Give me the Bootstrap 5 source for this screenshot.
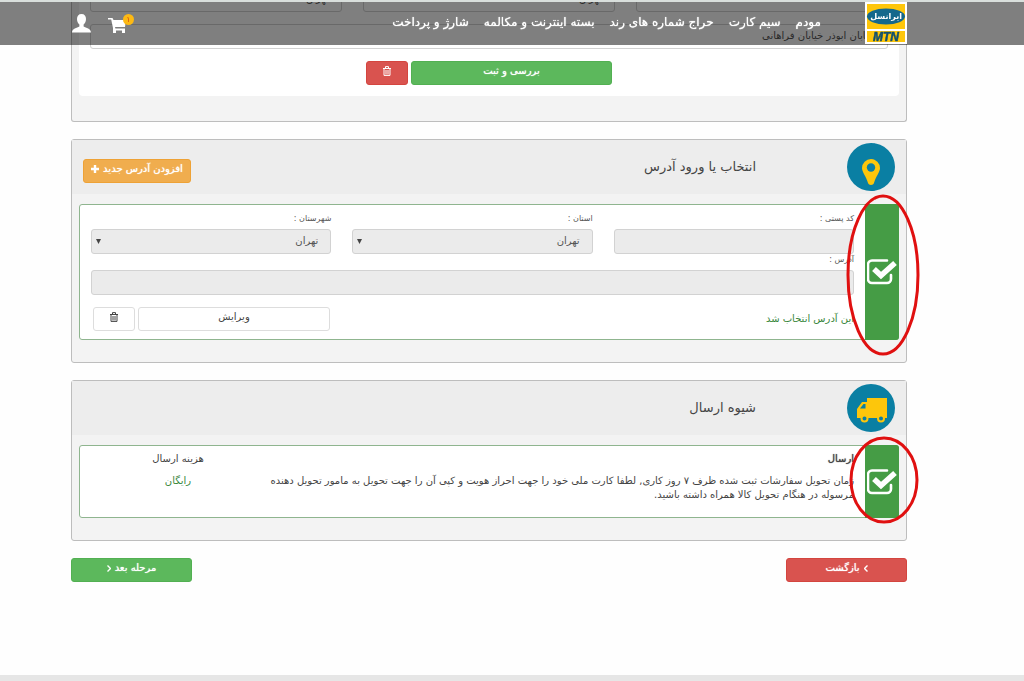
<!DOCTYPE html>
<html lang="fa" dir="rtl">
<head>
<meta charset="utf-8">
<meta name="viewport" content="width=device-width, initial-scale=1">
<title>ایرانسل</title>
<link href="https://cdn.jsdelivr.net/npm/bootstrap@5.3.0/dist/css/bootstrap.min.css" rel="stylesheet">
<style>
  body { font-family: "DejaVu Sans", sans-serif; font-size: 10px; line-height: 14px; color: #444; background: #fefefe; overflow-x: hidden; }
  .shell { padding-left: 71px; padding-right: 117px; }
  .topbar { height: 45px; background: rgba(0,0,0,.5); border-top: 2px solid #d9dfdc; z-index: 10; }
  .topbar a { color: #fff; text-decoration: none; font-size: 12px; text-shadow: 0 0 1px #fff; line-height: 18px; white-space: nowrap; }
  .menu { gap: 15px; margin-right: 44px; padding-top: 11px; }
  .logo { width: 42px; height: 42px; background: #fff; }
  .topbar .logo { text-shadow: none; }
  .cart-count { top: 0; left: 15px; width: 11px; height: 11px; border-radius: 50%; background: #fdb913; color: #d04a10; font-size: 8px; line-height: 11px; text-align: center; text-shadow: none; }
  .tools { gap: 17px; padding-left: 1px; padding-top: 12px; }
  .panel { background: #f3f3f3; border: 1px solid #bdbdbd; border-radius: 3px; margin-bottom: 17px; padding: 0 7px 22px; }
  .panel-first { border-top: 0; margin-top: -13px; padding-bottom: 25px; }
  .panel-top { background: #ededed; height: 54px; margin: 0 -7px 10px; padding: 0 11px; }
  .panel-top h2 { font-size: 13px; line-height: 18px; margin: 0 91px 0 0; font-weight: normal; color: #444; }
  .sheet { background: #fff; border-radius: 4px; padding: 0 11px 11px; }
  .chosen { background: #fff; border: 1px solid #8fb58f; border-radius: 3px; position: relative; }
  .chosen-body { padding: 8px 11px 8px; }
  .ship-body { padding: 6px 11px 15px; }
  .tick { width: 34px; flex: none; background: #459c45; margin: -1px -1px -1px 0; border-radius: 0 3px 3px 0; }
  .ring { position: absolute; pointer-events: none; overflow: visible; }
  .ring-tall { width: 76px; height: 162px; right: -23px; top: -11px; }
  .ring-short { width: 70px; height: 88px; right: -21px; top: -10px; }
  .fields { display: grid; grid-template-columns: repeat(3, 1fr); column-gap: 21px; }
  .field, .field:disabled { display: block; width: 100%; height: 25px; font-size: 10px; line-height: 14px; padding: 3px 12px 5px; border: 1px solid #d2d2d2; border-radius: 3px; background-color: #ebebeb; color: #555; opacity: 1; }
  select.field, select.field:disabled { background-image: url("data:image/svg+xml,%3Csvg xmlns='http://www.w3.org/2000/svg' viewBox='0 0 5 5'%3E%3Cpath d='M0 0h5L2.5 5z' fill='%23444'/%3E%3C/svg%3E"); background-size: 5px 5px; background-position: left 4px center; background-repeat: no-repeat; appearance: none; }
  .sheet .field { background-color: #fff; }
  .cap { display: block; font-size: 8px; line-height: 12px; color: #555; }
  .btn { font-size: 10px; line-height: 14px; padding: 2px 6px 6px; height: 24px; border-radius: 3px; color: #fff; display: inline-flex; align-items: center; justify-content: center; gap: 4px; white-space: nowrap; }
  .btn-go { background: #5cb85c; border-color: #52b052; }
  .btn-no { background: #d9534f; border-color: #d4453f; }
  .btn-add { background: #f0ad4e; border-color: #eea236; width: 108px; }
  .btn-plain { background: #fff; border-color: #ddd; color: #444; }
  .btn-go, .btn-no, .btn-add { text-shadow: 0 0 1px #fff; }
  .pair { gap: 3px; }
  .pair-end { padding-left: 2px; }
  .wide { width: 201px; }
  .mid { width: 192px; }
  .narrow { width: 42px; }
  .step { width: 121px; }
  .green-text { color: #38863b; }
  .note { white-space: nowrap; }
  .note strong { font-weight: normal; text-shadow: 0 0 1px #444; }
  .fee { width: 174px; flex: none; text-align: center; }
  .baseline-bar { height: 6px; background: #e6e6e6; }
</style>
</head>
<body class="d-flex flex-column min-vh-100">
<header class="topbar shell position-fixed top-0 start-0 end-0">
  <div class="d-flex align-items-start">
    <a href="#" class="logo" aria-label="ایرانسل">
      <svg width="42" height="42" viewBox="0 0 42 42" direction="ltr">
        <path d="M2 2h38v25H2zM2 29h38v11H2z" fill="#fec60a"/>
        <ellipse cx="21" cy="14.500" rx="19" ry="8" fill="#14688c"/>
        <text x="21" y="17" text-anchor="middle" font-family="DejaVu Sans" font-weight="bold" font-size="8" fill="#fff">ایرانسل</text>
        <text x="21" y="39" text-anchor="middle" font-family="Liberation Sans" font-weight="bold" font-style="italic" font-size="12" fill="#12506e" stroke="#12506e" stroke-width=".5">MTN</text>
      </svg>
    </a>
    <nav class="menu d-flex">
      <a href="#">مودم</a><a href="#">سیم کارت</a><a href="#">حراج شماره های رند</a><a href="#">بسته اینترنت و مکالمه</a><a href="#">شارژ و پرداخت</a>
    </nav>
    <div class="tools d-flex me-auto">
      <a href="#" class="position-relative" aria-label="سبد خرید">
        <svg width="26" height="20" viewBox="0 0 26 20"><path d="M0 4h4.500l1 2H18l-1 7H7l.4 1.500H17V19h-3v-2.500H8V19H5v-5L3.200 5.500H0z" fill="#fff"/></svg>
        <span class="cart-count position-absolute">۱</span>
      </a>
      <a href="#" aria-label="حساب کاربری">
        <svg width="19" height="19" viewBox="0 0 19 19"><path d="M9.500 0C6.500 0 5 2 5 5c0 2.500 1 4.500 2.400 5.600v1.800C5 13.800 0 14.400 0 18.500h19c0-4.100-5-4.700-7.400-6.100v-1.800C13 9.500 14 7.500 14 5c0-3-1.500-5-4.500-5z" fill="#fff"/></svg>
      </a>
    </div>
  </div>
</header>

<svg width="0" height="0" class="position-absolute">
  <symbol id="trash" viewBox="0 0 10 10"><path d="M1 2.500h8M3.500 2V.6h3V2M2 3v6.400h6V3M4 4v4.500M6 4v4.500" fill="none" stroke="currentColor" stroke-width="1"/></symbol>
  <symbol id="check" viewBox="0 0 30 26"><path d="M20 1.500H5a4 4 0 0 0-4 4V20a4 4 0 0 0 4 4h15a4 4 0 0 0 4-4v-4" fill="none" stroke="#fff" stroke-width="2.600" stroke-linecap="round"/><path d="M7 10l7 6.500L28 4" fill="none" stroke="#fff" stroke-width="5.500"/></symbol>
</svg>

<main class="shell overflow-hidden">
  <section class="panel panel-first">
    <div class="sheet">
      <div class="fields mb-2 pb-1">
        <input class="field" aria-label="کد پستی" value="۱۴۶۶۶۱۹۷۳۱">
        <select class="field" aria-label="استان"><option>تهران</option></select>
        <select class="field" aria-label="شهرستان"><option>تهران</option></select>
      </div>
      <input class="field" aria-label="آدرس" value="خیابان ابوذر خیابان فراهانی">
      <div class="d-flex justify-content-center mt-2 pt-1 pair">
        <button class="btn btn-go wide" type="button">بررسی و ثبت</button>
        <button class="btn btn-no narrow" type="button" aria-label="حذف"><svg width="10" height="10"><use href="#trash"/></svg></button>
      </div>
    </div>
  </section>

  <section class="panel">
    <div class="panel-top d-flex align-items-center">
      <svg width="48" height="48" viewBox="0 0 48 48"><circle cx="24" cy="24" r="24" fill="#0a7fa3"/><path d="M24 16a9 9 0 0 0-9 9c0 4 4 8 6 15 .6 2.500 5.400 2.500 6 0 2-7 6-11 6-15a9 9 0 0 0-9-9z" fill="#fdc60b"/><circle cx="24" cy="24.500" r="4.200" fill="#0a7fa3"/></svg>
      <h2>انتخاب یا ورود آدرس</h2>
      <button class="btn btn-add me-auto mt-2" type="button">افزودن آدرس جدید <svg width="8" height="8" viewBox="0 0 8 8"><path d="M4 0v8M0 4h8" stroke="#fff" stroke-width="2.400"/></svg></button>
    </div>
    <div class="chosen d-flex">
      <div class="tick d-flex align-items-center justify-content-center"><svg width="30" height="26"><use href="#check"/></svg></div>
      <div class="flex-grow-1 chosen-body">
        <div class="fields">
          <div><label class="cap mb-1" for="post">کد پستی :</label><input class="field" id="post" disabled></div>
          <div><label class="cap mb-1" for="prov">استان :</label><select class="field" id="prov" disabled><option>تهران</option></select></div>
          <div><label class="cap mb-1" for="town">شهرستان :</label><select class="field" id="town" disabled><option>تهران</option></select></div>
        </div>
        <label class="cap" for="addr">آدرس :</label>
        <input class="field mt-1" id="addr" disabled>
        <div class="d-flex align-items-center mt-2 pt-1">
          <span class="green-text">این آدرس انتخاب شد</span>
          <div class="d-flex me-auto pair pair-end">
            <button class="btn btn-plain mid" type="button">ویرایش</button>
            <button class="btn btn-plain narrow" type="button" aria-label="حذف"><svg width="10" height="10"><use href="#trash"/></svg></button>
          </div>
        </div>
      </div>
      <svg class="ring ring-tall" viewBox="0 0 76 162"><ellipse cx="38" cy="81" rx="35" ry="79" fill="none" stroke="#e01010" stroke-width="3"/></svg>
    </div>
  </section>

  <section class="panel">
    <div class="panel-top d-flex align-items-center">
      <svg width="48" height="48" viewBox="0 0 48 48"><circle cx="24" cy="24" r="24" fill="#0a7fa3"/><path d="M20 14h20v20H10v-9l5-7h5z" fill="#fdc60b"/><path d="M13 24.500l3.500-4.500h2v4.500z" fill="#0a7fa3"/><g fill="#0a7fa3" stroke="#fdc60b" stroke-width="2"><circle cx="17.500" cy="34.500" r="3"/><circle cx="34" cy="34.500" r="3"/></g></svg>
      <h2>شیوه ارسال</h2>
    </div>
    <div class="chosen d-flex">
      <div class="tick d-flex align-items-center justify-content-center"><svg width="30" height="26"><use href="#check"/></svg></div>
      <div class="flex-grow-1 d-flex justify-content-between ship-body">
        <div class="note">
          <strong class="d-block mb-2">ارسال</strong>
          زمان تحویل سفارشات ثبت شده ظرف ۷ روز کاری, لطفا کارت ملی خود را جهت احراز هویت و کپی آن را جهت تحویل به مامور تحویل دهنده<br>مرسوله در هنگام تحویل کالا همراه داشته باشید.
        </div>
        <div class="fee"><div class="mb-2">هزینه ارسال</div><div class="green-text">رایگان</div></div>
      </div>
      <svg class="ring ring-short" viewBox="0 0 70 88"><ellipse cx="35" cy="44" rx="33" ry="42" fill="none" stroke="#e01010" stroke-width="3"/></svg>
    </div>
  </section>

  <div class="d-flex justify-content-between">
    <button class="btn btn-no step" type="button"><svg width="4" height="7" viewBox="0 0 4 7"><path d="M3.500.5l-3 3 3 3" fill="none" stroke="#fff" stroke-width="1.400"/></svg>بازگشت</button>
    <button class="btn btn-go step" type="button">مرحله بعد<svg width="4" height="7" viewBox="0 0 4 7"><path d="M.5.5l3 3-3 3" fill="none" stroke="#fff" stroke-width="1.400"/></svg></button>
  </div>
</main>
<footer class="baseline-bar mt-auto"></footer>
<script src="https://cdn.jsdelivr.net/npm/bootstrap@5.3.0/dist/js/bootstrap.bundle.min.js"></script>
</body>
</html>
